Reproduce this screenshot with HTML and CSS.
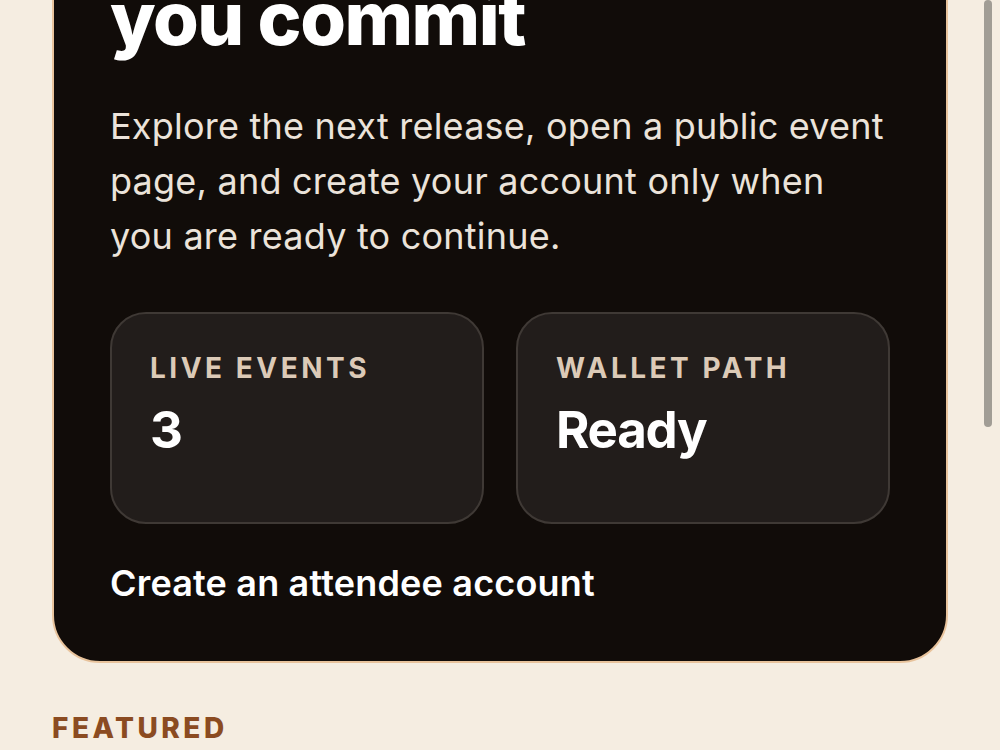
FILE: index.html
```html
<!DOCTYPE html>
<html lang="en">
<head>
    <meta charset="utf-8"/>
    <title>Events</title>
    <link rel="stylesheet" href="styles.css">
</head>
<body>
<div class="page">
    <section class="hero">
        <h1>you commit</h1>
        <p class="intro">Explore the next release, open a public event page, and create your account only when you are ready to continue.</p>
        <div class="stats">
            <div class="stat">
                <span class="stat-label">Live events</span>
                <span class="stat-value">3</span>
            </div>
            <div class="stat">
                <span class="stat-label">Wallet path</span>
                <span class="stat-value">Ready</span>
            </div>
        </div>
        <a class="cta" href="#">Create an attendee account</a>
    </section>

    <h2 class="section-title">Featured</h2>
</div>

<!-- overlay scroll thumb -->
<div class="scroll-thumb"></div>
</body>
</html>
```

FILE: styles.css
```css
*{
    padding: 0;
    margin: 0;
    box-sizing: border-box;
}

html, body{
    height: 100%;
    overflow: hidden;
}

body{
    background-color: #f5ede1;
    font-family: Inter, "Noto Sans", sans-serif;
    color: #ffffff;
}

.page{
    padding: 0 52px;
}

.hero{
    margin-top: -60px;
    padding: 36px 56px 56px;
    background-color: #110c09;
    border: 2px solid #e8c39c;
    border-radius: 48px;
}

.hero h1{
    font-size: 74px;
    line-height: 80px;
    font-weight: 800;
    letter-spacing: -0.02em;
}

.intro{
    margin-top: 41px;
    font-size: 36px;
    line-height: 55px;
    letter-spacing: 0.006em;
    color: #ebe3da;
}

.stats{
    display: grid;
    grid-template-columns: 1fr 1fr;
    gap: 32px;
    margin-top: 48px;
}

.stat{
    display: flex;
    flex-direction: column;
    gap: 14px;
    min-height: 212px;
    padding: 37px 38px;
    background-color: #221d1b;
    border: 2px solid #3f3935;
    border-radius: 36px;
}

.stat-label{
    font-size: 28px;
    line-height: 34px;
    font-weight: 700;
    letter-spacing: 0.125em;
    text-transform: uppercase;
    color: #dccab7;
}

.stat-value{
    font-size: 51px;
    line-height: 62px;
    font-weight: 700;
    letter-spacing: -0.025em;
}

.cta{
    display: inline-block;
    margin-top: 37px;
    font-size: 36px;
    line-height: 44px;
    font-weight: 600;
    letter-spacing: 0.005em;
    color: #ffffff;
    text-decoration: none;
}

.section-title{
    margin-top: 48px;
    font-size: 28px;
    line-height: 34px;
    font-weight: 800;
    letter-spacing: 0.125em;
    text-transform: uppercase;
    color: #8b4b21;
}

.scroll-thumb{
    position: fixed;
    top: 0;
    right: 8px;
    width: 8px;
    height: 427px;
    border-radius: 4px;
    background-color: #a19d95;
}
```
